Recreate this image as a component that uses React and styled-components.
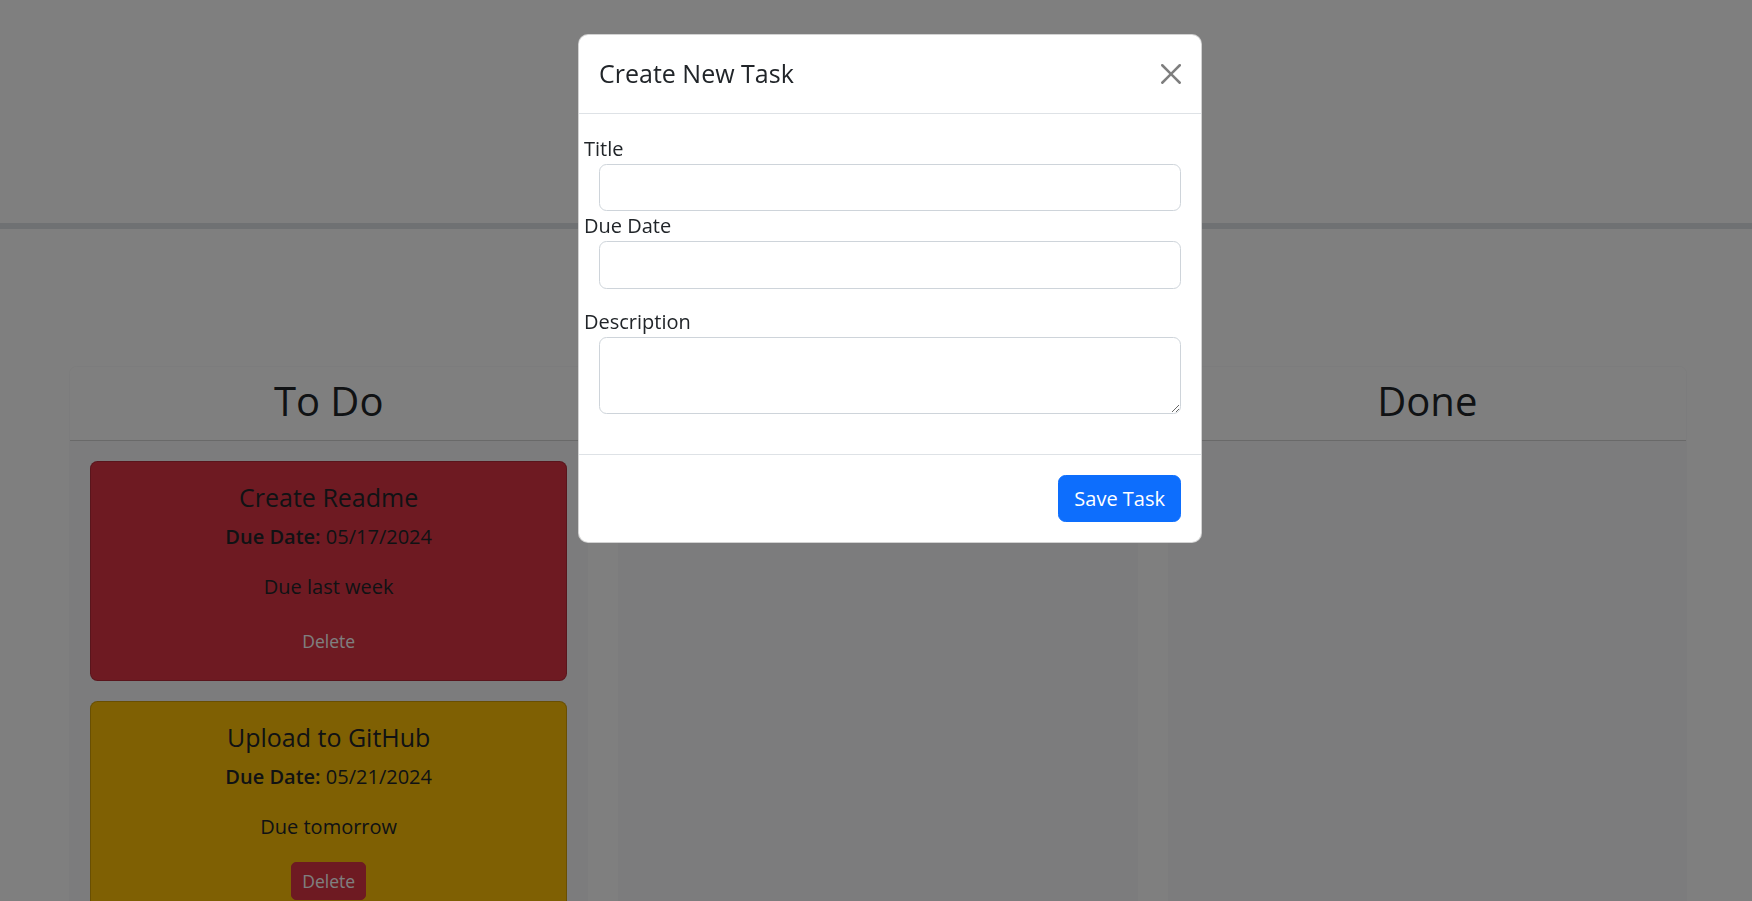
import React from 'react';
import styled, { createGlobalStyle } from 'styled-components';

const GlobalStyle = createGlobalStyle`
  *, *::before, *::after {
    box-sizing: border-box;
  }

  html, body {
    margin: 0;
    height: 100%;
  }

  body {
    font-family: "Open Sans", "Noto Sans", sans-serif;
    font-size: 20px;
    line-height: 1.5;
    color: #212529;
    background: #fff;
    overflow: hidden;
  }
`;

const Header = styled.header`
  height: 229px;
  border-bottom: 6px solid #dee2e6;
`;

const Main = styled.main`
  padding: 25px 65px 0 69px;
`;

const AddRow = styled.div`
  display: flex;
  justify-content: center;
  margin-bottom: 64.5px;
`;

const Button = styled.button`
  font-family: inherit;
  font-size: 20px;
  line-height: 1.5;
  padding: 7.5px 15px;
  color: #fff;
  background: ${props => props.$color};
  border: 1.25px solid ${props => props.$color};
  border-radius: 7.5px;
  cursor: pointer;
`;

const Lanes = styled.div`
  display: grid;
  grid-template-columns: repeat(3, 1fr);
  gap: 30px;
`;

const Lane = styled.section`
  display: flex;
  flex-direction: column;
  min-height: 1000px;
  border: 1.25px solid #f8f9fa;
  border-radius: 7.5px;
  overflow: hidden;
  background: #fff;
  text-align: center;
`;

const LaneHeader = styled.div`
  padding: 10px 20px;
  background: #fff;
  border-bottom: 1.25px solid rgba(0, 0, 0, 0.175);
`;

const LaneTitle = styled.h2`
  margin: 0 0 5px;
  font-size: 40px;
  font-weight: 400;
  line-height: 1.2;
`;

const LaneBody = styled.div`
  flex: 1;
  padding: 20px;
  background: #f8f9fa;
`;

const TaskCard = styled.article`
  margin-bottom: 20px;
  padding: 20px;
  background: ${props => props.$tone};
  border: 1.25px solid rgba(0, 0, 0, 0.175);
  border-radius: 7.5px;
`;

const TaskTitle = styled.h5`
  margin: 0 0 10px;
  font-size: 25px;
  font-weight: 400;
  line-height: 1.2;
`;

const TaskText = styled.p`
  margin: 0 0 20px;

  strong {
    font-weight: 600;
  }
`;

const DeleteButton = styled.button`
  font-family: inherit;
  font-size: 17.5px;
  line-height: 1.5;
  padding: 5px 10px;
  color: #fff;
  background: #dc3545;
  border: 1.25px solid #dc3545;
  border-radius: 5px;
  cursor: pointer;
`;

const Backdrop = styled.div`
  position: fixed;
  inset: 0;
  background: rgba(0, 0, 0, 0.5);
`;

const ModalWrap = styled.div`
  position: fixed;
  inset: 0;
  padding: 34px 0 0 578px;
`;

const Dialog = styled.div`
  width: 624px;
  background: #fff;
  border: 1.25px solid rgba(0, 0, 0, 0.175);
  border-radius: 10px;
`;

const ModalHeader = styled.div`
  display: flex;
  align-items: center;
  padding: 20px;
  border-bottom: 1.25px solid #dee2e6;
`;

const ModalTitle = styled.h5`
  margin: 0;
  font-size: 25px;
  font-weight: 400;
  line-height: 1.5;
`;

const CloseButton = styled.button`
  display: flex;
  align-items: center;
  justify-content: center;
  width: 30px;
  height: 30px;
  margin: -10px -5px -10px auto;
  padding: 5px;
  border: 0;
  background: transparent;
  opacity: 0.5;
  cursor: pointer;
`;

const ModalBody = styled.div`
  padding: 20px;
`;

const Form = styled.form`
  display: flex;
  flex-direction: column;
`;

const Label = styled.label`
  display: block;
  margin-left: -15px;
`;

const Field = styled.input`
  display: block;
  width: 100%;
  height: 47.5px;
  margin-bottom: ${props => props.$gap || '0px'};
  padding: 7.5px 15px;
  font-family: inherit;
  font-size: 20px;
  line-height: 1.5;
  color: #212529;
  border: 1.25px solid #ced4da;
  border-radius: 7.5px;
`;

const TextArea = styled.textarea`
  display: block;
  width: 100%;
  height: 77.5px;
  margin-bottom: 20px;
  padding: 7.5px 15px;
  font-family: inherit;
  font-size: 20px;
  line-height: 1.5;
  color: #212529;
  border: 1.25px solid #ced4da;
  border-radius: 7.5px;
`;

const ModalFooter = styled.div`
  display: flex;
  justify-content: flex-end;
  padding: 15px;
  border-top: 1.25px solid #dee2e6;
`;

const SaveButton = styled(Button)`
  margin: 5px;
`;

const tasks = [
  { id: 1, title: 'Create Readme', date: '05/17/2024', note: 'Due last week', tone: '#dc3545' },
  { id: 2, title: 'Upload to GitHub', date: '05/21/2024', note: 'Due tomorrow', tone: '#ffc107' },
];

const CloseIcon = () => (
  <svg width="20" height="20" viewBox="0 0 16 16" fill="#000">
    <path d="M.293.293a1 1 0 0 1 1.414 0L8 6.586 14.293.293a1 1 0 1 1 1.414 1.414L9.414 8l6.293 6.293a1 1 0 0 1-1.414 1.414L8 9.414l-6.293 6.293a1 1 0 0 1-1.414-1.414L6.586 8 .293 1.707a1 1 0 0 1 0-1.414" />
  </svg>
);

const App = () => {
  return (
    <>
      <GlobalStyle />
      <Header />

      <Main>
        <AddRow>
          <Button $color="#198754">Add Task</Button>
        </AddRow>

        <Lanes>
          <Lane>
            <LaneHeader>
              <LaneTitle>To Do</LaneTitle>
            </LaneHeader>
            <LaneBody>
              {tasks.map(task => (
                <TaskCard key={task.id} $tone={task.tone}>
                  <TaskTitle>{task.title}</TaskTitle>
                  <TaskText>
                    <strong>Due Date:</strong> {task.date}
                  </TaskText>
                  <TaskText>{task.note}</TaskText>
                  <DeleteButton>Delete</DeleteButton>
                </TaskCard>
              ))}
            </LaneBody>
          </Lane>

          <Lane>
            <LaneHeader>
              <LaneTitle>In Progress</LaneTitle>
            </LaneHeader>
            <LaneBody />
          </Lane>

          <Lane>
            <LaneHeader>
              <LaneTitle>Done</LaneTitle>
            </LaneHeader>
            <LaneBody />
          </Lane>
        </Lanes>
      </Main>

      <Backdrop />
      <ModalWrap>
        <Dialog>
          <ModalHeader>
            <ModalTitle>Create New Task</ModalTitle>
            <CloseButton aria-label="Close">
              <CloseIcon />
            </CloseButton>
          </ModalHeader>
          <ModalBody>
            <Form>
              <Label htmlFor="task-title">Title</Label>
              <Field id="task-title" type="text" />
              <Label htmlFor="task-date">Due Date</Label>
              <Field id="task-date" type="text" $gap="18px" />
              <Label htmlFor="task-desc">Description</Label>
              <TextArea id="task-desc" rows={2} />
            </Form>
          </ModalBody>
          <ModalFooter>
            <SaveButton $color="#0d6efd">Save Task</SaveButton>
          </ModalFooter>
        </Dialog>
      </ModalWrap>
    </>
  );
};

export default App;
